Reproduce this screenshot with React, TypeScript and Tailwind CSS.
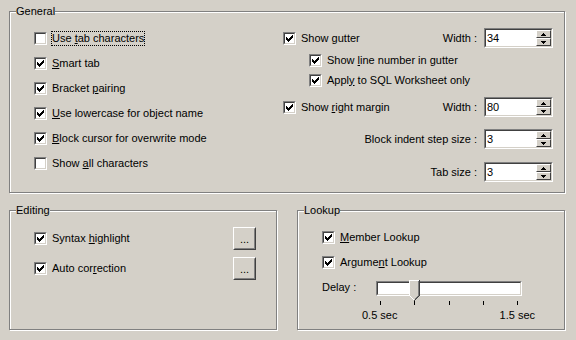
import React from "react";

/* ── classic 3D pieces ── */
function Check() {
  return (
    <svg width="7" height="7" viewBox="0 0 7 7" shapeRendering="crispEdges" className="block">
      <path
        d="M6 0h1v1H6zM5 1h2v1H5zM0 2h1v1H0zM4 2h3v1H4zM0 3h2v1H0zM3 3h3v1H3zM0 4h5v1H0zM1 5h3v1H1zM2 6h1v1H2z"
        fill="#000"
      />
    </svg>
  );
}

function CheckBox({ checked }: { checked: boolean }) {
  return (
    <span className="flex w-[13px] h-[13px] shrink-0 border border-t-[#808080] border-l-[#808080] border-r-white border-b-white">
      <span className="flex flex-1 border border-t-[#404040] border-l-[#404040] border-r-[#d4d0c8] border-b-[#d4d0c8] bg-white p-[1px]">
        {checked && <Check />}
      </span>
    </span>
  );
}

function Option({ label, checked = true, focused = false }: { label: React.ReactNode; checked?: boolean; focused?: boolean }) {
  return (
    <div className="flex items-center">
      <CheckBox checked={checked} />
      <span className={focused ? "ml-[5px] leading-[13px] outline-1 outline-dotted outline-black" : "ml-[5px] leading-[13px]"}>
        {label}
      </span>
    </div>
  );
}

function SpinBtn({ up }: { up?: boolean }) {
  return (
    <span className="flex flex-1 items-center justify-center bg-[#d4d0c8] border border-t-white border-l-white border-r-[#404040] border-b-[#404040]">
      <svg width="5" height="3" viewBox="0 0 5 3" shapeRendering="crispEdges" className="block">
        {up ? (
          <path d="M2 0h1v1H2zM1 1h3v1H1zM0 2h5v1H0z" fill="#000" />
        ) : (
          <path d="M0 0h5v1H0zM1 1h3v1H1zM2 2h1v1H2z" fill="#000" />
        )}
      </svg>
    </span>
  );
}

function Spin({ value }: { value: string }) {
  return (
    <div className="flex w-[69px] h-[20px] shrink-0 border border-t-[#808080] border-l-[#808080] border-r-white border-b-white">
      <div className="flex flex-1 border border-t-[#404040] border-l-[#404040] border-r-[#d4d0c8] border-b-[#d4d0c8] bg-white">
        <span className="flex-1 pl-[1px] leading-[16px]">{value}</span>
        <div className="flex flex-col w-[15px]">
          <SpinBtn up />
          <SpinBtn />
        </div>
      </div>
    </div>
  );
}

function DotsButton() {
  return (
    <span className="flex w-[23px] h-[23px] shrink-0 border border-t-white border-l-white border-r-[#404040] border-b-[#404040]">
      <span className="flex flex-1 items-end justify-center pb-[3px] border border-transparent border-r-[#808080] border-b-[#808080] leading-[11px]">
        ...
      </span>
    </span>
  );
}

function Thumb() {
  return (
    <svg width="11" height="21" viewBox="0 0 11 21" shapeRendering="crispEdges" className="block">
      <path d="M0 0h11v16l-5 5h-1l-5-5z" fill="#d4d0c8" />
      <path d="M0 0h10v1H1v15H0zM1 16h1v1H1zM2 17h1v1H2zM3 18h1v1H3zM4 19h1v1H4z" fill="#fff" />
      <path d="M9 1h1v15H9zM8 16h1v1H8zM7 17h1v1H7zM6 18h1v1H6z" fill="#808080" />
      <path d="M10 0h1v16h-1zM9 16h1v1H9zM8 17h1v1H8zM7 18h1v1H7zM6 19h1v1H6zM5 20h1v1H5z" fill="#404040" />
    </svg>
  );
}

const groupCls = "border border-[#808080] shadow-[inset_1px_1px_0_#fff,1px_1px_0_#fff]";

export default function App() {
  return (
    <div className="w-[576px] h-[340px] overflow-hidden bg-[#d4d0c8] pl-[9px] pt-[5px] font-['Liberation_Sans',Arial,sans-serif] text-[11px] text-black">
      {/* ── General ── */}
      <fieldset className={`w-[556px] h-[188px] ${groupCls}`}>
        <legend className="ml-[6px] leading-[13px] bg-[#d4d0c8]">General</legend>
        <div className="flex">
          <div className="flex flex-col w-[273px] pl-[24px] pt-[8px]">
            <div className="flex h-[25px] items-center">
              <Option checked={false} focused label={<>Use <u>t</u>ab characters</>} />
            </div>
            <div className="flex h-[25px] items-center">
              <Option label={<><u>S</u>mart tab</>} />
            </div>
            <div className="flex h-[25px] items-center">
              <Option label={<>Bracket <u>p</u>airing</>} />
            </div>
            <div className="flex h-[25px] items-center">
              <Option label={<><u>U</u>se lowercase for object name</>} />
            </div>
            <div className="flex h-[25px] items-center">
              <Option label={<><u>B</u>lock cursor for overwrite mode</>} />
            </div>
            <div className="flex h-[25px] items-center">
              <Option checked={false} label={<>Show <u>a</u>ll characters</>} />
            </div>
          </div>

          <div className="flex flex-col w-[270px]">
            <div className="flex h-[20px] mt-[10px] items-center">
              <Option label={<>Show <u>g</u>utter</>} />
              <span className="flex-1" />
              <span className="mr-[7px]">Width :</span>
              <Spin value="34" />
            </div>
            <div className="flex h-[20px] mt-[2px] items-center pl-[26px]">
              <Option label={<>Show <u>l</u>ine number in gutter</>} />
            </div>
            <div className="flex h-[20px] items-center pl-[26px]">
              <Option label={<>Appl<u>y</u> to SQL Worksheet only</>} />
            </div>
            <div className="flex h-[20px] mt-[7px] items-center">
              <Option label={<>Show <u>r</u>ight margin</>} />
              <span className="flex-1" />
              <span className="mr-[7px]">Width :</span>
              <Spin value="80" />
            </div>
            <div className="flex h-[20px] mt-[12px] items-center justify-end">
              <span className="mr-[7px]">Block indent step size :</span>
              <Spin value="3" />
            </div>
            <div className="flex h-[20px] mt-[13px] items-center justify-end">
              <span className="mr-[7px]">Tab size :</span>
              <Spin value="3" />
            </div>
          </div>
        </div>
      </fieldset>

      <div className="flex gap-[20px] mt-[11px]">
        {/* ── Editing ── */}
        <fieldset className={`w-[268px] h-[126px] ${groupCls}`}>
          <legend className="ml-[6px] leading-[13px] bg-[#d4d0c8]">Editing</legend>
          <div className="flex flex-col gap-[6px] pl-[24px] pt-[9px]">
            <div className="flex w-[222px] h-[24px] items-center">
              <Option label={<>Syntax <u>h</u>ighlight</>} />
              <span className="flex-1" />
              <DotsButton />
            </div>
            <div className="flex w-[222px] h-[24px] items-center">
              <Option label={<>Auto cor<u>r</u>ection</>} />
              <span className="flex-1" />
              <DotsButton />
            </div>
          </div>
        </fieldset>

        {/* ── Lookup ── */}
        <fieldset className={`w-[268px] h-[126px] ${groupCls}`}>
          <legend className="ml-[6px] leading-[13px] bg-[#d4d0c8]">Lookup</legend>
          <div className="flex flex-col pl-[24px] pt-[8px]">
            <div className="flex h-[25px] items-center">
              <Option label={<><u>M</u>ember Lookup</>} />
            </div>
            <div className="flex h-[25px] items-center">
              <Option label={<>Argume<u>n</u>t Lookup</>} />
            </div>
            <div className="flex mt-[5px]">
              <span className="w-[54px] pt-[1px] leading-[13px]">Delay :</span>
              <div className="relative w-[146px]">
                <div className="mt-[1px] h-[15px] flex border border-t-[#808080] border-l-[#808080] border-r-white border-b-white">
                  <div className="flex-1 border border-t-[#404040] border-l-[#404040] border-r-[#d4d0c8] border-b-[#d4d0c8] bg-white" />
                </div>
                <div className="absolute left-[33px] top-0">
                  <Thumb />
                </div>
                <div className="flex justify-between px-[4px] mt-[5px]">
                  <span className="w-[1px] h-[4px] bg-black" />
                  <span className="w-[1px] h-[4px] bg-black" />
                  <span className="w-[1px] h-[4px] bg-black" />
                  <span className="w-[1px] h-[4px] bg-black" />
                  <span className="w-[1px] h-[4px] bg-black" />
                </div>
                <div className="flex justify-between -ml-[14px] -mr-[13px] mt-[4px] leading-[13px]">
                  <span>0.5 sec</span>
                  <span>1.5 sec</span>
                </div>
              </div>
            </div>
          </div>
        </fieldset>
      </div>
    </div>
  );
}
